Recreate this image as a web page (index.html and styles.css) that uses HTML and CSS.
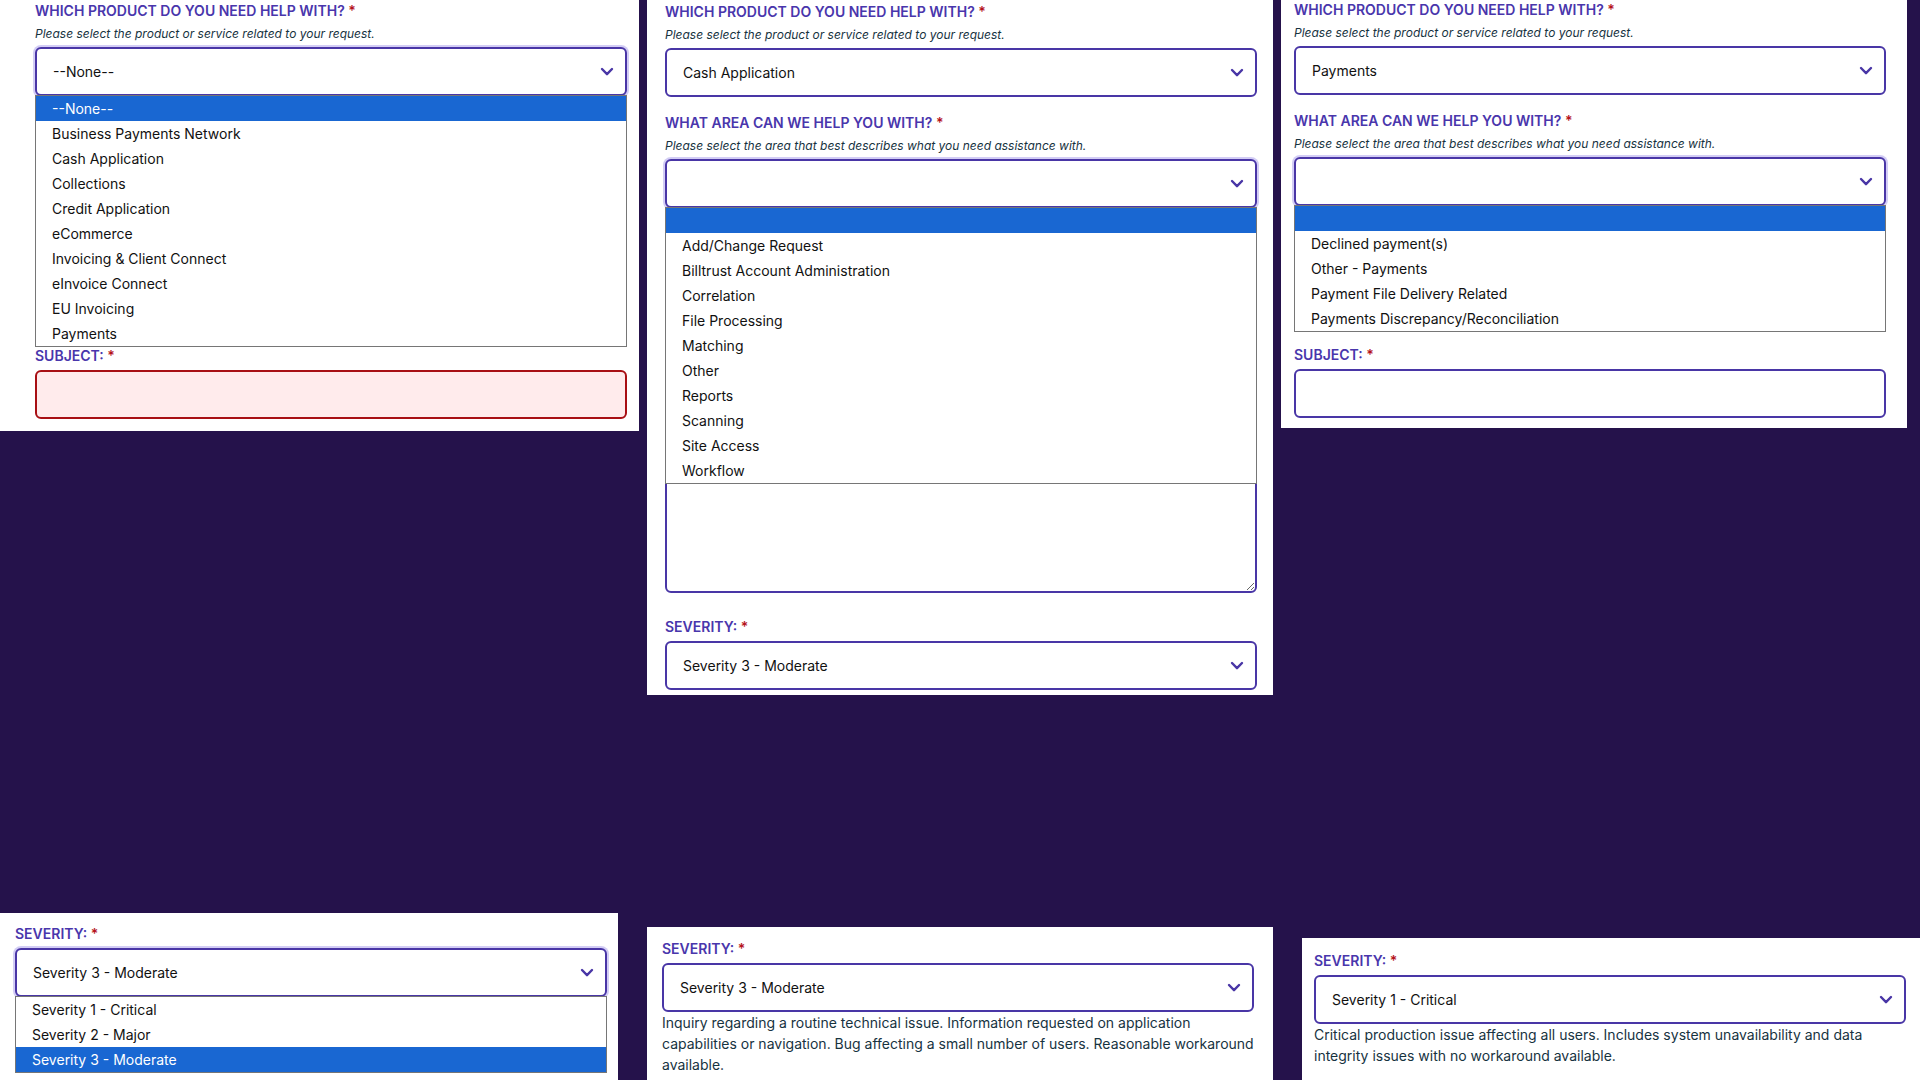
FILE: index.html
```html
<!DOCTYPE html>
<html lang="en">
<head>
    <meta charset="UTF-8">
    <meta name="viewport" content="width=device-width, initial-scale=1.0">
    <title>Support Request</title>
    <link rel="stylesheet" href="styles.css">
</head>
<body>
    <!-- chevron shared by all drop-downs -->
    <svg class="sprite" width="0" height="0" aria-hidden="true">
        <symbol id="chevron" viewBox="0 0 14 10">
            <path d="M2 2 L7 7.2 L12 2" fill="none" stroke="currentColor" stroke-width="2.4" stroke-linecap="round" stroke-linejoin="round"/>
        </symbol>
    </svg>

    <main class="page">
        <div class="row row-top">
            <form class="panel panel-product">
                <div class="field">
                    <label for="product1">WHICH PRODUCT DO YOU NEED HELP WITH? <span class="required">*</span></label>
                    <p class="hint">Please select the product or service related to your request.</p>
                    <div class="select-wrap open">
                        <select id="product1"><option>--None--</option></select>
                        <svg class="chevron"><use href="#chevron"/></svg>
                    </div>
                    <ul class="menu" role="listbox">
                        <li role="option" class="active">--None--</li>
                        <li role="option">Business Payments Network</li>
                        <li role="option">Cash Application</li>
                        <li role="option">Collections</li>
                        <li role="option">Credit Application</li>
                        <li role="option">eCommerce</li>
                        <li role="option">Invoicing &amp; Client Connect</li>
                        <li role="option">eInvoice Connect</li>
                        <li role="option">EU Invoicing</li>
                        <li role="option">Payments</li>
                    </ul>
                </div>
                <div class="field">
                    <label for="subject1">SUBJECT: <span class="required">*</span></label>
                    <input type="text" id="subject1" class="error">
                </div>
            </form>

            <form class="panel panel-cash">
                <div class="field">
                    <label for="product2">WHICH PRODUCT DO YOU NEED HELP WITH? <span class="required">*</span></label>
                    <p class="hint">Please select the product or service related to your request.</p>
                    <div class="select-wrap">
                        <select id="product2"><option>Cash Application</option></select>
                        <svg class="chevron"><use href="#chevron"/></svg>
                    </div>
                </div>
                <div class="field field-area">
                    <label for="area2">WHAT AREA CAN WE HELP YOU WITH? <span class="required">*</span></label>
                    <p class="hint">Please select the area that best describes what you need assistance with.</p>
                    <div class="select-wrap open">
                        <select id="area2"><option></option></select>
                        <svg class="chevron"><use href="#chevron"/></svg>
                    </div>
                    <ul class="menu" role="listbox">
                        <li role="option" class="active"></li>
                        <li role="option">Add/Change Request</li>
                        <li role="option">Billtrust Account Administration</li>
                        <li role="option">Correlation</li>
                        <li role="option">File Processing</li>
                        <li role="option">Matching</li>
                        <li role="option">Other</li>
                        <li role="option">Reports</li>
                        <li role="option">Scanning</li>
                        <li role="option">Site Access</li>
                        <li role="option">Workflow</li>
                    </ul>
                    <textarea id="description" aria-label="Description"></textarea>
                </div>
                <div class="field field-severity">
                    <label for="severity2">SEVERITY: <span class="required">*</span></label>
                    <div class="select-wrap">
                        <select id="severity2"><option>Severity 3 - Moderate</option></select>
                        <svg class="chevron"><use href="#chevron"/></svg>
                    </div>
                </div>
            </form>

            <form class="panel panel-payments">
                <div class="field">
                    <label for="product3">WHICH PRODUCT DO YOU NEED HELP WITH? <span class="required">*</span></label>
                    <p class="hint">Please select the product or service related to your request.</p>
                    <div class="select-wrap">
                        <select id="product3"><option>Payments</option></select>
                        <svg class="chevron"><use href="#chevron"/></svg>
                    </div>
                </div>
                <div class="field field-area">
                    <label for="area3">WHAT AREA CAN WE HELP YOU WITH? <span class="required">*</span></label>
                    <p class="hint">Please select the area that best describes what you need assistance with.</p>
                    <div class="select-wrap open">
                        <select id="area3"><option></option></select>
                        <svg class="chevron"><use href="#chevron"/></svg>
                    </div>
                    <ul class="menu" role="listbox">
                        <li role="option" class="active"></li>
                        <li role="option">Declined payment(s)</li>
                        <li role="option">Other - Payments</li>
                        <li role="option">Payment File Delivery Related</li>
                        <li role="option">Payments Discrepancy/Reconciliation</li>
                    </ul>
                </div>
                <div class="field field-subject">
                    <label for="subject3">SUBJECT: <span class="required">*</span></label>
                    <input type="text" id="subject3">
                </div>
            </form>
        </div>

        <div class="row row-bottom">
            <form class="panel panel-severity-open">
                <div class="field">
                    <label for="severity4">SEVERITY: <span class="required">*</span></label>
                    <div class="select-wrap open">
                        <select id="severity4"><option>Severity 3 - Moderate</option></select>
                        <svg class="chevron"><use href="#chevron"/></svg>
                    </div>
                    <ul class="menu" role="listbox">
                        <li role="option">Severity 1 - Critical</li>
                        <li role="option">Severity 2 - Major</li>
                        <li role="option" class="active">Severity 3 - Moderate</li>
                    </ul>
                </div>
            </form>

            <form class="panel panel-moderate">
                <div class="field">
                    <label for="severity5">SEVERITY: <span class="required">*</span></label>
                    <div class="select-wrap">
                        <select id="severity5"><option>Severity 3 - Moderate</option></select>
                        <svg class="chevron"><use href="#chevron"/></svg>
                    </div>
                    <p class="description">Inquiry regarding a routine technical issue. Information requested on application capabilities or navigation. Bug affecting a small number of users. Reasonable workaround available.</p>
                </div>
            </form>

            <form class="panel panel-critical">
                <div class="field">
                    <label for="severity6">SEVERITY: <span class="required">*</span></label>
                    <div class="select-wrap">
                        <select id="severity6"><option>Severity 1 - Critical</option></select>
                        <svg class="chevron"><use href="#chevron"/></svg>
                    </div>
                    <p class="description">Critical production issue affecting all users. Includes system unavailability and data integrity issues with no workaround available.</p>
                </div>
            </form>
        </div>
    </main>
</body>
</html>
```
FILE: styles.css
```css
* {
    box-sizing: border-box;
}
body {
    margin: 0;
    background-color: #25124b;
    color: #111;
    font-family: Inter, "Liberation Sans", sans-serif;
    font-size: 14px;
}
.sprite {
    position: absolute;
}
.page {
    display: flex;
    flex-direction: column;
    justify-content: space-between;
    gap: 40px;
    min-height: 100vh;
}
.row {
    display: grid;
}
.row-top {
    grid-template-columns: 639fr 626fr 626fr;
    gap: 8px;
    align-items: start;
    padding-right: 13px;
}
.row-bottom {
    grid-template-columns: 618fr 626fr 618fr;
    gap: 29px;
    align-items: end;
}

/* panels */
.panel {
    background: #fff;
}
.panel-product {
    padding: 3px 12px 12px 35px;
}
.panel-cash {
    padding: 4px 16px 5px 18px;
}
.panel-payments {
    padding: 2px 21px 10px 13px;
}
.panel-severity-open {
    padding: 13px 11px 7px 15px;
}
.panel-moderate {
    padding: 14px 19px 5px 15px;
}
.panel-critical {
    padding: 15px 14px 14px 12px;
}

/* fields */
.field-area {
    margin-top: 18px;
}
.field-subject {
    margin-top: 15px;
}
.field-severity {
    margin-top: 26px;
}
label {
    display: block;
    margin-bottom: 6px;
    color: #4936ac;
    font-weight: 600;
    line-height: 16px;
}
.required {
    color: #b5121b;
}
.hint {
    margin: 0 0 4px;
    color: #17333f;
    font-size: 12px;
    font-style: italic;
    line-height: 18px;
}
.select-wrap {
    position: relative;
}
select, input, textarea {
    display: block;
    width: 100%;
    height: 49px;
    padding: 0 16px;
    background: #fff;
    border: 2px solid #4936a6;
    border-radius: 6px;
    color: #111;
    font: inherit;
    outline: none;
}
select {
    appearance: none;
}
.open select {
    box-shadow: 0 0 0 2px #d3cdf5;
}
.chevron {
    position: absolute;
    top: 20px;
    right: 13px;
    width: 14px;
    height: 10px;
    color: #4936a6;
    pointer-events: none;
}
input.error {
    background: #ffebec;
    border-color: #a80f14;
}
/* the open menu lies over the top of the text area */
textarea {
    height: 149px;
    margin-top: -40px;
    resize: vertical;
}
.menu {
    position: relative;
    margin: -1px 0 0;
    padding: 0;
    background: #fff;
    border: 1px solid #767676;
    list-style: none;
}
.menu li {
    height: 25px;
    padding: 0 16px;
    line-height: 25px;
}
.menu .active {
    background: #1967d2;
    color: #fff;
}
.panel-product .menu {
    margin-bottom: 1px;
}
.description {
    margin: 0;
    color: #17333f;
    line-height: 21px;
}
```
